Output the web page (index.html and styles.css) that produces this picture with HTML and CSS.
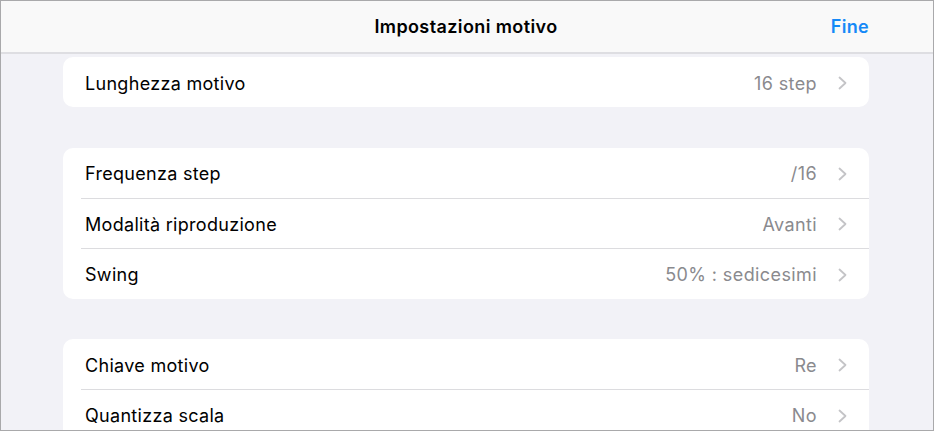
FILE: index.html
```html
<!DOCTYPE html>
<html lang="it">
<head>
<meta charset="utf-8">
<title>Impostazioni motivo</title>
<link rel="stylesheet" href="styles.css">
</head>
<body>
<div class="frame">
  <header class="header">
    <div class="header-side"></div>
    <h1 class="title">Impostazioni motivo</h1>
    <div class="header-side header-right"><button class="done">Fine</button></div>
  </header>
  <main class="content">
    <section class="card">
      <div class="row"><div class="row-body"><span class="label">Lunghezza motivo</span><span class="value">16 step</span><svg class="chev" viewBox="0 0 9 14" width="9" height="14"><path d="M1.5 1.5 L7.5 7 L1.5 12.5"/></svg></div></div>
    </section>
    <section class="card">
      <div class="row"><div class="row-body"><span class="label">Frequenza step</span><span class="value">/16</span><svg class="chev" viewBox="0 0 9 14" width="9" height="14"><path d="M1.5 1.5 L7.5 7 L1.5 12.5"/></svg></div></div>
      <div class="row"><div class="row-body"><span class="label">Modalità riproduzione</span><span class="value">Avanti</span><svg class="chev" viewBox="0 0 9 14" width="9" height="14"><path d="M1.5 1.5 L7.5 7 L1.5 12.5"/></svg></div></div>
      <div class="row"><div class="row-body"><span class="label">Swing</span><span class="value">50% : sedicesimi</span><svg class="chev" viewBox="0 0 9 14" width="9" height="14"><path d="M1.5 1.5 L7.5 7 L1.5 12.5"/></svg></div></div>
    </section>
    <section class="card">
      <div class="row"><div class="row-body"><span class="label">Chiave motivo</span><span class="value">Re</span><svg class="chev" viewBox="0 0 9 14" width="9" height="14"><path d="M1.5 1.5 L7.5 7 L1.5 12.5"/></svg></div></div>
      <div class="row"><div class="row-body"><span class="label">Quantizza scala</span><span class="value">No</span><svg class="chev" viewBox="0 0 9 14" width="9" height="14"><path d="M1.5 1.5 L7.5 7 L1.5 12.5"/></svg></div></div>
    </section>
  </main>
</div>
</body>
</html>
```

FILE: styles.css
```css
* { box-sizing: border-box; }
html, body { margin: 0; padding: 0; }
body {
  width: 934px;
  height: 431px;
  overflow: hidden;
  font-family: Inter, "Liberation Sans", sans-serif;
  -webkit-font-smoothing: antialiased;
}
.frame {
  width: 934px;
  height: 431px;
  border: 1px solid #a9a9ab;
  background: #f2f2f7;
  overflow: hidden;
  display: flex;
  flex-direction: column;
}
.header {
  flex: 0 0 auto;
  height: 53px;
  background: #f9f9f9;
  border-bottom: 2px solid #dedee2;
  display: grid;
  grid-template-columns: 1fr auto 1fr;
  align-items: center;
  padding: 0 64px 0 62px;
}
.title {
  margin: 0;
  font-size: 18px;
  font-weight: 600;
  color: #000;
  letter-spacing: 0.4px;
}
.header-right { display: flex; justify-content: flex-end; }
.done {
  background: none;
  border: 0;
  padding: 0;
  font: inherit;
  font-size: 18px;
  font-weight: 600;
  color: #1589f7;
  letter-spacing: 0.3px;
}
.content {
  padding: 3px 64px 0 62px;
  display: flex;
  flex-direction: column;
  gap: 40.5px;
}
.card {
  background: #fff;
  border-radius: 10px;
  overflow: hidden;
}
.row {
  padding-left: 18px;
}
.row-body {
  height: 50px;
  display: flex;
  align-items: center;
  padding: 2px 22px 0 4px;
}
.row + .row .row-body {
  border-top: 1px solid #dcdcdf;
  height: 50.5px;
}
.label {
  flex: 1;
  font-size: 18px;
  color: #000;
  letter-spacing: 0.3px;
}
.value {
  font-size: 18px;
  color: #8a8a8e;
  letter-spacing: 0.4px;
}
.chev {
  margin-left: 21px;
  width: 9px;
  height: 14px;
  fill: none;
  stroke: #c4c4c7;
  stroke-width: 1.8;
  stroke-linecap: round;
  stroke-linejoin: round;
}
```
